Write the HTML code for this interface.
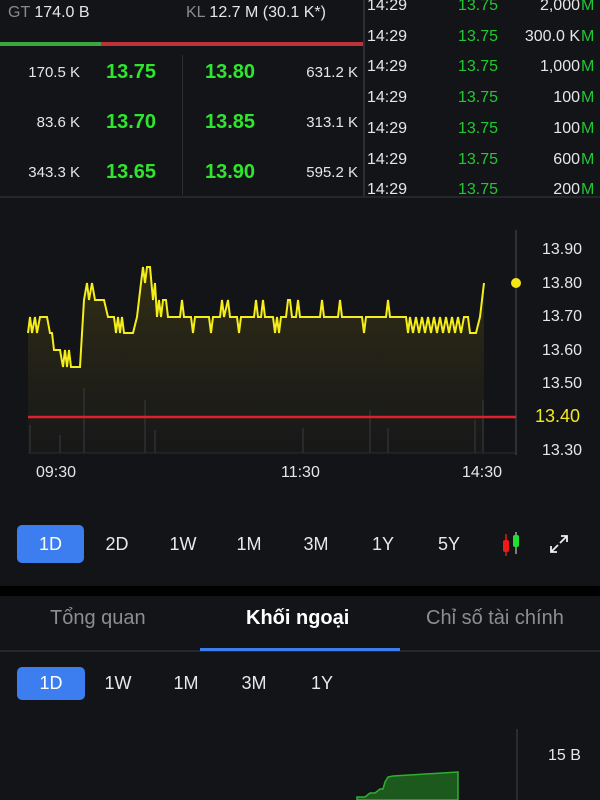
<!DOCTYPE html>
<html><head><meta charset="utf-8"><style>
body{margin:0;width:600px;height:800px;background:#131418;font-family:"Liberation Sans",sans-serif;overflow:hidden;position:relative;color:#e6e6e6}
.a{position:absolute;white-space:nowrap}
.g{color:#2fe62f}
.gr{color:#22c832}
.btn{position:absolute;font-size:18px;color:#e8e8e8;text-align:center;line-height:38px}
.sel{background:#3c7ef0;border-radius:5px;color:#fff}
</style></head><body>
<div class="a" style="left:8px;top:4px;font-size:16px"><span style="color:#8a8a8a">GT</span> 174.0 B</div>
<div class="a" style="left:186px;top:4px;font-size:16px"><span style="color:#8a8a8a">KL</span> 12.7 M (30.1 K*)</div>
<div class="a" style="left:0;top:42px;width:101px;height:4px;background:#3aa840"></div>
<div class="a" style="left:101px;top:42px;width:262px;height:4px;background:#c0323a"></div>
<div class="a" style="left:182px;top:55px;width:1px;height:140px;background:#2c2e33"></div>
<div class="a" style="left:363px;top:0;width:2px;height:197px;background:#2c2e33"></div>
<div class="a" style="left:0;top:196px;width:600px;height:2px;background:#24262b"></div>
<div class="a" style="left:0;width:80px;text-align:right;top:64px;font-size:15px">170.5 K</div>
<div class="a g" style="left:106px;top:61px;font-size:20px;font-weight:bold">13.75</div>
<div class="a g" style="left:205px;top:61px;font-size:20px;font-weight:bold">13.80</div>
<div class="a" style="left:280px;width:78px;text-align:right;top:64px;font-size:15px">631.2 K</div>
<div class="a" style="left:0;width:80px;text-align:right;top:114px;font-size:15px">83.6 K</div>
<div class="a g" style="left:106px;top:111px;font-size:20px;font-weight:bold">13.70</div>
<div class="a g" style="left:205px;top:111px;font-size:20px;font-weight:bold">13.85</div>
<div class="a" style="left:280px;width:78px;text-align:right;top:114px;font-size:15px">313.1 K</div>
<div class="a" style="left:0;width:80px;text-align:right;top:164px;font-size:15px">343.3 K</div>
<div class="a g" style="left:106px;top:161px;font-size:20px;font-weight:bold">13.65</div>
<div class="a g" style="left:205px;top:161px;font-size:20px;font-weight:bold">13.90</div>
<div class="a" style="left:280px;width:78px;text-align:right;top:164px;font-size:15px">595.2 K</div>
<div class="a" style="left:367px;top:-9px;font-size:16px;line-height:30.7px">14:29<br>14:29<br>14:29<br>14:29<br>14:29<br>14:29<br>14:29</div>
<div class="a gr" style="left:458px;top:-9px;font-size:16px;line-height:30.7px">13.75<br>13.75<br>13.75<br>13.75<br>13.75<br>13.75<br>13.75</div>
<div class="a" style="left:480px;width:100px;text-align:right;top:-9px;font-size:16px;line-height:30.7px">2,000<br>300.0 K<br>1,000<br>100<br>100<br>600<br>200</div>
<div class="a gr" style="left:581px;top:-9px;font-size:16px;line-height:30.7px">M<br>M<br>M<br>M<br>M<br>M<br>M</div>
<svg class="a" style="left:0;top:198px" width="600" height="300" viewBox="0 198 600 300">
<defs><linearGradient id="f" x1="0" y1="0" x2="0" y2="1"><stop offset="0" stop-color="#3a3515" stop-opacity=".8"/><stop offset="1" stop-color="#1a1a18" stop-opacity=".6"/></linearGradient></defs>
<path d="M28,333 L30,317 L32,333 L35,317 L37,333 L40,317 L47,317 L50,333 L52,333 L54,350 L60,350 L63,367 L65,350 L67,367 L69,350 L71,367 L80,367 L84,300 L87,283 L89,300 L92,283 L95,300 L104,300 L108,317 L114,317 L116,333 L118,317 L120,333 L122,317 L124,333 L133,333 L137,317 L141,283 L143,267 L145,283 L147,267 L150,267 L153,300 L155,283 L157,317 L159,300 L161,317 L163,300 L166,300 L168,317 L180,317 L182,300 L184,317 L191,317 L193,333 L195,317 L209,317 L211,333 L213,317 L220,317 L222,300 L224,317 L228,300 L230,317 L237,317 L239,333 L241,317 L245,317 L247,317 L254,317 L256,300 L258,317 L261,317 L263,300 L265,317 L273,317 L275,333 L277,317 L279,333 L281,317 L286,317 L288,300 L290,300 L292,317 L296,317 L298,300 L300,317 L320,317 L322,300 L324,317 L338,317 L340,300 L342,317 L362,317 L364,333 L366,317 L386,317 L388,300 L390,317 L406,317 L408,333 L410,317 L413,333 L416,317 L419,333 L422,317 L425,333 L428,317 L431,333 L434,317 L437,333 L440,317 L443,333 L446,317 L449,333 L452,317 L455,333 L458,317 L461,333 L464,317 L468,317 L470,333 L476,333 L480,317 L484,283 L484,453 L28,453 Z" fill="url(#f)" stroke="none"/>
<path d="M28,333 L30,317 L32,333 L35,317 L37,333 L40,317 L47,317 L50,333 L52,333 L54,350 L60,350 L63,367 L65,350 L67,367 L69,350 L71,367 L80,367 L84,300 L87,283 L89,300 L92,283 L95,300 L104,300 L108,317 L114,317 L116,333 L118,317 L120,333 L122,317 L124,333 L133,333 L137,317 L141,283 L143,267 L145,283 L147,267 L150,267 L153,300 L155,283 L157,317 L159,300 L161,317 L163,300 L166,300 L168,317 L180,317 L182,300 L184,317 L191,317 L193,333 L195,317 L209,317 L211,333 L213,317 L220,317 L222,300 L224,317 L228,300 L230,317 L237,317 L239,333 L241,317 L245,317 L247,317 L254,317 L256,300 L258,317 L261,317 L263,300 L265,317 L273,317 L275,333 L277,317 L279,333 L281,317 L286,317 L288,300 L290,300 L292,317 L296,317 L298,300 L300,317 L320,317 L322,300 L324,317 L338,317 L340,300 L342,317 L362,317 L364,333 L366,317 L386,317 L388,300 L390,317 L406,317 L408,333 L410,317 L413,333 L416,317 L419,333 L422,317 L425,333 L428,317 L431,333 L434,317 L437,333 L440,317 L443,333 L446,317 L449,333 L452,317 L455,333 L458,317 L461,333 L464,317 L468,317 L470,333 L476,333 L480,317 L484,283" fill="none" stroke="#f5ee1a" stroke-width="2"/>
<g stroke="#3a3b3f" stroke-width="1">
<line x1="84" y1="453" x2="84" y2="388"/><line x1="145" y1="453" x2="145" y2="400"/><line x1="370" y1="453" x2="370" y2="410"/><line x1="483" y1="453" x2="483" y2="400"/><line x1="30" y1="453" x2="30" y2="425"/><line x1="60" y1="453" x2="60" y2="435"/><line x1="155" y1="453" x2="155" y2="430"/><line x1="303" y1="453" x2="303" y2="428"/><line x1="388" y1="453" x2="388" y2="428"/><line x1="475" y1="453" x2="475" y2="420"/>
</g>
<line x1="28" y1="453" x2="516" y2="453" stroke="#2a2c30"/>
<line x1="516" y1="230" x2="516" y2="455" stroke="#2e3035" stroke-width="2"/>
<line x1="28" y1="417" x2="516" y2="417" stroke="#e0202c" stroke-width="2.5"/>
<circle cx="516" cy="283" r="5" fill="#f5e614"/>
<g font-family="Liberation Sans" font-size="16" fill="#e6e6e6">
<text x="542" y="254">13.90</text><text x="542" y="288">13.80</text><text x="542" y="321">13.70</text><text x="542" y="355">13.60</text><text x="542" y="388">13.50</text><text x="542" y="455">13.30</text>
<text x="535" y="422" font-size="18" fill="#f0e820">13.40</text>
<text x="36" y="477">09:30</text><text x="281" y="477">11:30</text><text x="462" y="477">14:30</text>
</g>
</svg>
<div class="btn sel" style="left:17px;top:525px;width:67px">1D</div>
<div class="btn" style="left:84px;top:525px;width:66px">2D</div>
<div class="btn" style="left:150px;top:525px;width:66px">1W</div>
<div class="btn" style="left:216px;top:525px;width:66px">1M</div>
<div class="btn" style="left:283px;top:525px;width:66px">3M</div>
<div class="btn" style="left:350px;top:525px;width:66px">1Y</div>
<div class="btn" style="left:416px;top:525px;width:66px">5Y</div>
<svg class="a" style="left:498px;top:530px" width="28" height="28"><line x1="8" y1="4" x2="8" y2="26" stroke="#c22" stroke-width="1.5"/><rect x="5" y="10" width="6" height="12" rx="2" fill="#f01818"/><line x1="18" y1="2" x2="18" y2="24" stroke="#9a9" stroke-width="1.5"/><rect x="15" y="5" width="6" height="12" rx="2" fill="#22e030"/></svg>
<svg class="a" style="left:548px;top:533px" width="22" height="22" fill="none" stroke="#eee" stroke-width="1.8"><path d="M13,3 H19 V9 M19,3 L12,10 M3,13 V19 H9 M3,19 L10,12"/></svg>
<div class="a" style="left:0;top:586px;width:600px;height:10px;background:#000"></div>
<div class="a" style="left:50px;top:607px;font-size:20px;color:#8c8e92">Tổng quan</div>
<div class="a" style="left:246px;top:607px;font-size:20px;color:#fff;font-weight:bold">Khối ngoại</div>
<div class="a" style="left:426px;top:607px;font-size:20px;color:#8c8e92">Chỉ số tài chính</div>
<div class="a" style="left:0;top:650px;width:600px;height:2px;background:#26282d"></div>
<div class="a" style="left:200px;top:648px;width:200px;height:3px;background:#3c7ef0"></div>
<div class="btn sel" style="left:17px;top:667px;width:68px;height:33px;line-height:33px">1D</div>
<div class="btn" style="left:85px;top:667px;width:66px;line-height:33px">1W</div>
<div class="btn" style="left:153px;top:667px;width:66px;line-height:33px">1M</div>
<div class="btn" style="left:221px;top:667px;width:66px;line-height:33px">3M</div>
<div class="btn" style="left:289px;top:667px;width:66px;line-height:33px">1Y</div>
<div class="a" style="left:516px;top:729px;width:2px;height:71px;background:#2a2c31"></div>
<div class="a" style="left:548px;top:747px;font-size:16px">15 B</div>
<svg class="a" style="left:340px;top:760px" width="130" height="40"><path d="M17,40 V37 H25 L30,33 H35 L40,29 H43 L45,22 L48,17 L53,16 L118,12 V40 Z" fill="#1b5a1c" stroke="#2fb030" stroke-width="1.5"/></svg>
</body></html>
